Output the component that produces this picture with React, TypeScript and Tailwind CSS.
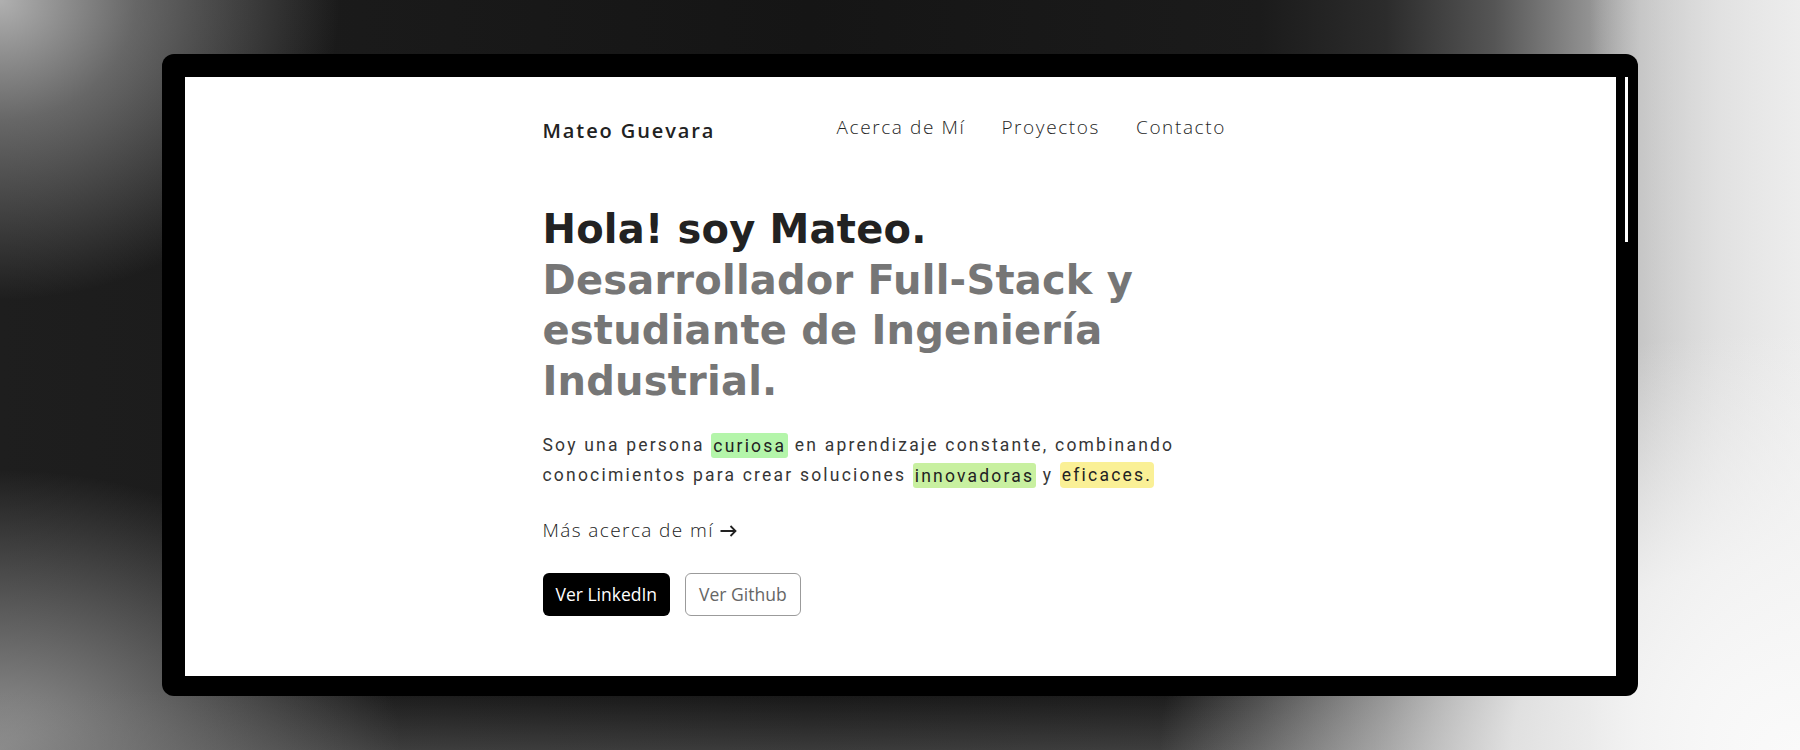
import React from 'react';

const navLinks = ['Acerca de Mí', 'Proyectos', 'Contacto'];

const App: React.FC = () => {
  return (
    <div className="w-[1800px] h-[750px] overflow-hidden bg-[linear-gradient(90deg,#1e1e1e_0%,#151515_45%,#1b1b1b_70%,#2c2c2c_77%,#555555_83%,#9a9a9a_89%,#e4e4e4_100%)]">
      {/* soft light in the corners of the backdrop */}
      <div className="w-full h-full bg-[radial-gradient(ellipse_340px_300px_at_0px_0px,rgba(176,176,176,1)_0%,rgba(176,176,176,0.5)_40%,rgba(176,176,176,0)_100%)]">
        <div className="w-full h-full bg-[radial-gradient(ellipse_400px_280px_at_0px_750px,rgba(150,150,150,1)_0%,rgba(150,150,150,0.5)_50%,rgba(150,150,150,0)_100%)]">
          <div className="w-full h-full bg-[linear-gradient(180deg,rgba(120,120,120,0)_0px,rgba(120,120,120,0)_690px,rgba(120,120,120,0.38)_750px)]">
            <div className="w-full h-full bg-[linear-gradient(90deg,rgba(232,232,232,0)_0px,rgba(232,232,232,0)_1590px,rgba(228,228,228,0.5)_1640px,rgba(234,234,234,0.75)_1720px,rgba(238,238,238,0.85)_1800px)]">
              <div className="w-full h-full flex items-center justify-center bg-[radial-gradient(ellipse_640px_420px_at_1800px_750px,rgba(250,250,250,1)_0%,rgba(245,245,245,0.85)_45%,rgba(245,245,245,0)_100%)]">
                {/* Browser frame */}
                <div className="w-[1476px] h-[642px] bg-black rounded-[12px] flex pt-[23px] pb-[20px] pl-[23px]">
                  <div className="w-[1431px] h-[599px] bg-white overflow-hidden">
                    <div className="w-[716px] mx-auto">
                      {/* Header */}
                      <nav className="flex items-start pt-[37px]">
                        <a className="block w-[294px] mt-[3px] font-['Open_Sans'] font-semibold text-[20px] leading-[27px] tracking-[1.9px] text-[#222]">
                          Mateo Guevara
                        </a>
                        <ul className="flex gap-[36px] font-['Open_Sans'] font-light text-[19px] leading-[27px] tracking-[1.6px] text-[#262626]">
                          {navLinks.map((link) => (
                            <li key={link}>{link}</li>
                          ))}
                        </ul>
                      </nav>

                      {/* Hero */}
                      <h1 className="mt-[60px] font-['DejaVu_Sans'] font-bold text-[40px] leading-[50.5px] tracking-[0.2px] text-[#767676]">
                        <span className="block text-[#222]">Hola! soy Mateo.</span>
                        Desarrollador Full-Stack y estudiante de Ingeniería Industrial.
                      </h1>

                      <p className="mt-[24px] font-['Roboto'] text-[17.5px] leading-[30px] tracking-[2.2px] text-[#363636]">
                        Soy una persona{' '}
                        <span className="bg-[#b4f5aa] text-[#222] px-[2px] py-[2.5px] rounded-[3px]">curiosa</span> en aprendizaje
                        constante, combinando conocimientos para crear soluciones{' '}
                        <span className="bg-[#c8f0a0] text-[#222] px-[2px] py-[2.5px] rounded-[3px]">innovadoras</span> y{' '}
                        <span className="bg-[#faf096] text-[#222] px-[2px] py-[3px] rounded-[4px]">eficaces.</span>
                      </p>

                      <a className="flex items-center gap-[6px] mt-[25px] font-['Open_Sans'] font-light text-[19px] leading-[30px] tracking-[1.4px] text-[#222]">
                        Más acerca de mí
                        <svg width="17" height="12" viewBox="0 0 17 12" fill="none" className="mt-[1px]">
                          <path d="M0.5 6H15.5M10.5 1L15.5 6L10.5 11" stroke="#222" strokeWidth="1.8" />
                        </svg>
                      </a>

                      <div className="flex gap-[15px] mt-[28px] font-['Open_Sans'] text-[17.5px]">
                        <button className="h-[43px] px-[13px] rounded-[6px] bg-black text-white">Ver LinkedIn</button>
                        <button className="h-[43px] px-[13px] rounded-[6px] border border-[#9b9b9b] bg-white text-[#666]">
                          Ver Github
                        </button>
                      </div>
                    </div>
                  </div>

                  {/* Scrollbar */}
                  <div className="w-[22px] pl-[9px]">
                    <div className="w-[3px] h-[165px] bg-white" />
                  </div>
                </div>
              </div>
            </div>
          </div>
        </div>
      </div>
    </div>
  );
};

export default App;
